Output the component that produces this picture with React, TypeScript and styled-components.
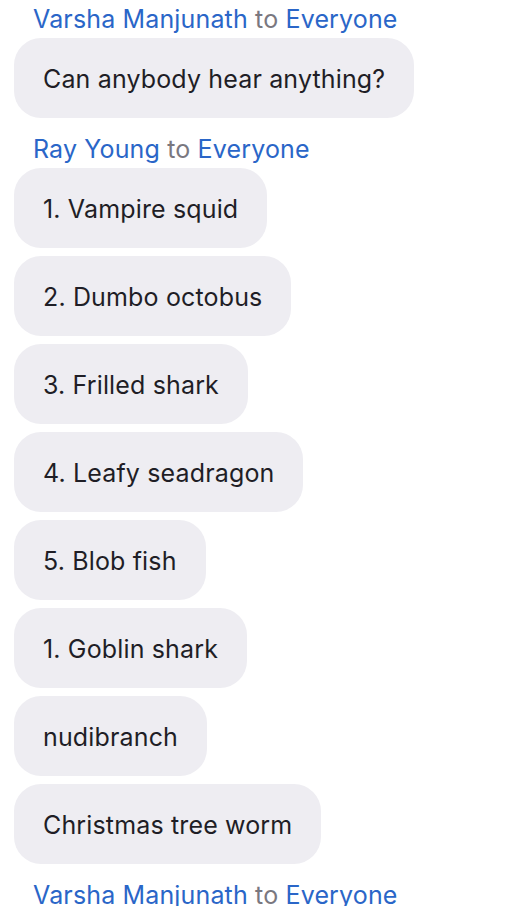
import React from "react";
import styled, { createGlobalStyle } from "styled-components";

const Global = createGlobalStyle`
  html, body { margin: 0; padding: 0; background: #ffffff; }
  body { font-family: Inter, "Noto Sans", sans-serif; -webkit-font-smoothing: antialiased; }
`;

const Feed = styled.div`
  display: flex;
  flex-direction: column;
  gap: 12px;
  padding: 0 0 0 14px;
  overflow: hidden;
  height: 906px;
`;

const Group = styled.section`
  display: flex;
  flex-direction: column;
  align-items: flex-start;
`;

const Header = styled.div`
  height: 38px;
  box-sizing: border-box;
  padding: 4px 0 0 19px;
  font-size: 25px;
  line-height: 30px;
  letter-spacing: 0.15px;
  white-space: nowrap;
  color: #2a66c8;
`;

const To = styled.span`
  color: #7a7880;
`;

const Bubbles = styled.div`
  display: flex;
  flex-direction: column;
  align-items: flex-start;
  gap: 8px;
`;

const Bubble = styled.div`
  box-sizing: border-box;
  height: 80px;
  padding: 26px 29px 24px;
  border-radius: 27px;
  background: #eeedf2;
  color: #1f1e26;
  font-size: 25px;
  line-height: 30px;
  letter-spacing: 0.15px;
  white-space: nowrap;
`;

const groups = [
  { from: "Varsha Manjunath", msgs: ["Can anybody hear anything?"] },
  {
    from: "Ray Young",
    msgs: [
      "1. Vampire squid",
      "2. Dumbo octobus",
      "3. Frilled shark",
      "4. Leafy seadragon",
      "5. Blob fish",
      "1. Goblin shark",
      "nudibranch",
      "Christmas tree worm",
    ],
  },
  { from: "Varsha Manjunath", msgs: [] as string[] },
];

export default function App() {
  return (
    <>
      <Global />
      <Feed>
        {groups.map((g, i) => (
          <Group key={i}>
            <Header>
              {g.from} <To>to</To> Everyone
            </Header>
            {g.msgs.length > 0 && (
              <Bubbles>
                {g.msgs.map((m, j) => (
                  <Bubble key={j}>{m}</Bubble>
                ))}
              </Bubbles>
            )}
          </Group>
        ))}
      </Feed>
    </>
  );
}
